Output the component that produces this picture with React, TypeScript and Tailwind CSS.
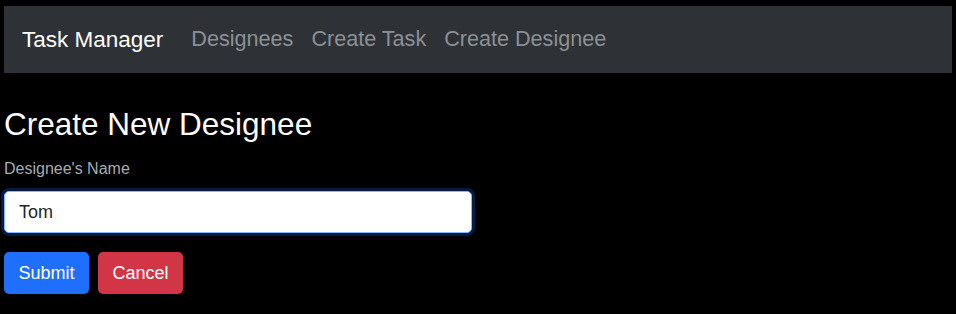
export default function App() {
  return (
    <div className="min-h-[314px] bg-black font-['Liberation_Sans',Arial,sans-serif]">
      <nav className="mx-[4px] pt-[6px]">
        <div className="flex h-[67px] items-center bg-[#2e3236] px-[18px]">
          <a className="mr-[28px] text-[22.5px] text-white">Task Manager</a>
          <div className="flex items-center gap-[18px] text-[21.6px] text-[#8c9094]">
            <a>Designees</a>
            <a>Create Task</a>
            <a>Create Designee</a>
          </div>
        </div>
      </nav>
      <main className="px-[4px] pt-[32px]">
        <h3 className="text-[31.5px] leading-[38px] text-white">Create New Designee</h3>
        <form className="mt-[16px]" onSubmit={(e) => e.preventDefault()}>
          <label className="block text-[16px] leading-[20px] text-[#a9acaf]">Designee's Name</label>
          <input
            defaultValue="Tom"
            className="mt-[12px] block h-[42px] w-[468px] rounded-[5px] border border-[#86b7fe] bg-white px-[14px] text-[18px] text-[#212529] shadow-[0_0_0_3px_rgba(13,110,253,0.25)] outline-none"
          />
          <div className="mt-[19px] flex gap-[9px]">
            <button type="submit" className="h-[42px] w-[85px] rounded-[5px] bg-[#1f6ffd] text-[18px] text-white">
              Submit
            </button>
            <button type="button" className="h-[42px] w-[85px] rounded-[5px] bg-[#d23545] text-[18px] text-white">
              Cancel
            </button>
          </div>
        </form>
      </main>
    </div>
  );
}
